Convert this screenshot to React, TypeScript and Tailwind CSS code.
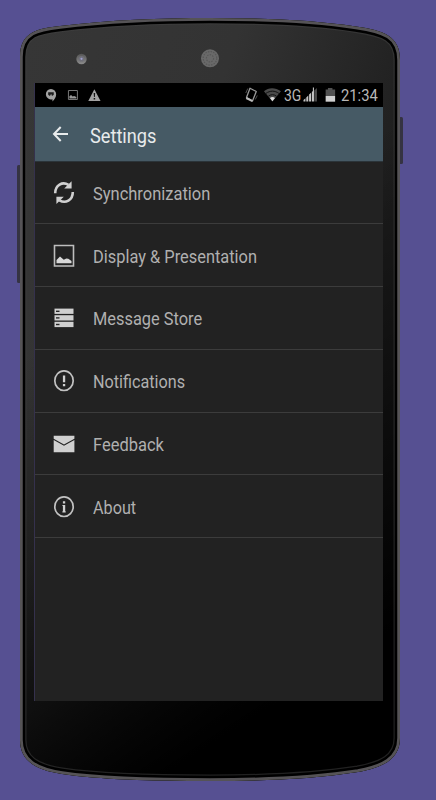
import type { ReactNode } from 'react'

interface SettingsItem {
  label: string
  icon: ReactNode
  labelClass: string
}

const BODY =
  'M20 57C20 31 39 28.5 60 26C110 20 160 18 210 18C262 18 313 20 356 26.5C384 30.5 400 36 400 60V738C400 760 382 767.5 358 772C310 779.5 260 781 210 781C150 781 100 779.5 62 774C36 770 20 761 20 740Z'

function PhoneBody() {
  return (
    <svg className="absolute inset-0" width="436" height="800" viewBox="0 0 436 800">
      <defs>
        <linearGradient id="shell" gradientUnits="userSpaceOnUse" x1="20" y1="60" x2="400" y2="180">
          <stop offset="0" stopColor="#363636" />
          <stop offset="0.5" stopColor="#333333" />
          <stop offset="1" stopColor="#1e1e1e" />
        </linearGradient>
        <linearGradient id="shade" gradientUnits="userSpaceOnUse" x1="20" y1="360" x2="250" y2="720">
          <stop offset="0" stopColor="#000" stopOpacity="0" />
          <stop offset="1" stopColor="#000" />
        </linearGradient>
        <linearGradient id="lens" x1="0" y1="0" x2="0" y2="1">
          <stop offset="0" stopColor="#555" />
          <stop offset="1" stopColor="#8c8c8c" />
        </linearGradient>
        <clipPath id="shell-clip">
          <path d={BODY} />
        </clipPath>
      </defs>
      <rect x="17" y="165" width="4" height="118" rx="1.5" fill="#353343" />
      <rect x="399" y="117" width="4" height="47" rx="1.5" fill="#353343" />
      <g clipPath="url(#shell-clip)">
        <path d={BODY} fill="url(#shell)" />
        <path d={BODY} fill="url(#shade)" />
        <path d={BODY} fill="none" stroke="#424242" strokeOpacity="0.5" strokeWidth="13" />
        <path d={BODY} fill="none" stroke="#000" strokeWidth="10.5" />
        <path d={BODY} fill="none" stroke="#555356" strokeWidth="5.5" />
      </g>
      <circle cx="81.5" cy="59" r="5.2" fill="url(#lens)" />
      <circle cx="81.5" cy="58.8" r="2.8" fill="#70707a" />
      <circle cx="81.5" cy="58.8" r="1.1" fill="#a0a0d0" />
      <circle cx="210" cy="58.3" r="9" fill="#696969" />
      <circle cx="210" cy="58.3" r="6.8" fill="none" stroke="#575757" strokeWidth="1.2" strokeDasharray="1.5 1.2" />
      <circle cx="210" cy="58.3" r="3.6" fill="none" stroke="#585858" strokeWidth="1.2" strokeDasharray="1.5 1.2" />
    </svg>
  )
}

function StatusBar() {
  return (
    <div className="flex h-6 shrink-0 items-center bg-black text-[#b8b8b8]">
      <svg width="68" height="24" viewBox="0 0 68 24" fill="#a2a2a2">
        <path d="M16 6a5.200 5.200 0 0 1 5.200 5.200c0 3-1.800 5.500-3.700 7.300v-2.300A5.200 5.200 0 1 1 16 6z" />
        <path d="M13.200 9.300h5.600v2.500l-1.300 1h-.8l.2-1.300h-1.300l-.4 1.300h-.8l-1.200-1z" fill="#1c1c1c" />
        <path d="M33.500 7.500h9v9h-9z" fill="none" stroke="#777" strokeWidth="1" />
        <path d="M34.500 15.500v-2.200l1.600-1.300 1.600 1.500 1.500-.6 2.200 1v1.600z" fill="#999" />
        <path d="M59.500 6.200 65.700 18H53.400z" />
        <path d="M58.800 10h1.500l-.3 4h-.9zM58.800 15h1.500v1.500h-1.500z" fill="#111" />
      </svg>
      <svg className="ml-[140px]" width="41" height="24" viewBox="0 0 41 24">
        <g fill="none" stroke="#999" strokeWidth="1.300">
          <path d="M7 5.200 13.300 8.500 9.500 18 3.500 14.500z" strokeLinejoin="round" />
          <path d="M3.300 15 9.500 18.200" strokeWidth="2" stroke="#bbb" />
          <path d="M2.800 10 4.800 5.500M14.300 12.500 12.300 16.500" strokeWidth=".8" stroke="#666" />
        </g>
        <path d="M21 8.200C25.500 4.300 32.500 4.300 38 8.200L29.500 18.500z" fill="#4a4a4a" />
        <path d="M23 10.400c4-3 9-3 13 0M25.400 13.200c2.700-2 5.500-2 8.200 0" fill="none" stroke="#111" strokeWidth="1" />
        <path d="M27 15c1.600-1.200 3.400-1.200 5 0l-2.500 3.300z" fill="#ddd" />
      </svg>
      <span className="w-[18px] whitespace-nowrap text-[17px] leading-6">
        <span className="inline-block origin-left scale-x-[0.82]">3G</span>
      </span>
      <svg width="39" height="24" viewBox="0 0 39 24">
        <path d="M12.300 7.500 15 5v13.500h-2.700z" fill="#4a4a4a" />
        <path d="M1.500 18.500v-1.500L3.500 15.200v3.300zM4.300 18.500v-4.100l2-1.900v6zM7.100 18.500v-6.900l2-1.900v8.800zM9.900 18.500V9l1-1V4.500h1.100v14z" fill="#c4c4c4" />
        <path d="M23.700 6.500H26V5h4.500v1.500H33.200V13h-9.500z" fill="#515151" />
        <path d="M23.700 13h9.500v5.700h-9.500z" fill="#d0d0d0" />
      </svg>
      <span className="whitespace-nowrap text-[17px] leading-6">
        <span className="inline-block origin-left scale-x-[0.87]">21:34</span>
      </span>
    </div>
  )
}

function SyncIcon() {
  return (
    <svg width="22" height="24" viewBox="0 0 22 24" fill="none" stroke="#d0d0d0" strokeWidth="2.600">
      <path d="M2.200 12.200C2.200 4 9.500 .2 15.500 3.900M19.800 11C19.800 19.200 12.500 23 6.500 19.300" />
      <path d="M18.600 .3v7.200h-7.400zM3.400 22.900v-7.200h7.400z" fill="#d0d0d0" stroke="none" />
    </svg>
  )
}

function PictureIcon() {
  return (
    <svg width="22" height="24" viewBox="0 0 22 24">
      <path d="M1.500 1.500h19v20.500h-19z" fill="none" stroke="#bdbdbd" strokeWidth="1.600" />
      <path d="M3.500 19.200v-3.200l3.500-3.600 3.800 3.300 2.500-1.300 2 .4 3.200 2.100v2.300z" fill="#d8d8d8" />
    </svg>
  )
}

function StoreIcon() {
  return (
    <svg width="22" height="24" viewBox="0 0 22 24">
      {[2.6, 9.2, 15.8].map((y) => (
        <g key={y}>
          <path d={`M1.500 ${y}h19v5.300h-19z`} fill="#d0d0d0" />
          <path d={`M3 ${y + 2}h3.500v1.400H3z`} fill="#252525" />
        </g>
      ))}
    </svg>
  )
}

function AlertIcon() {
  return (
    <svg width="22" height="24" viewBox="0 0 22 24">
      <ellipse cx="11" cy="11.700" rx="9.200" ry="9.800" fill="none" stroke="#c2c2c2" strokeWidth="1.700" />
      <path d="M9.900 6.500h2.300v6.800H9.900zM9.900 15h2.300v2.300H9.900z" fill="#d0d0d0" />
    </svg>
  )
}

function MailIcon() {
  return (
    <svg width="22" height="24" viewBox="0 0 22 24" fill="#d0d0d0">
      <path d="M.7 3.700h20.700v3L11 12.500.7 6.700z" />
      <path d="M.7 8 11 13.800 21.400 8v12.200H.7z" />
    </svg>
  )
}

function InfoIcon() {
  return (
    <svg width="22" height="24" viewBox="0 0 22 24">
      <ellipse cx="11" cy="11.700" rx="9.200" ry="9.800" fill="none" stroke="#c2c2c2" strokeWidth="1.700" />
      <path d="M9.900 6.200h2.300v2.200H9.900zM9.400 9.900h2.800v6.300h.5v1.200H9.400v-1.200h.5v-5.100h-.5z" fill="#d0d0d0" />
    </svg>
  )
}

const items: SettingsItem[] = [
  { label: 'Synchronization', icon: <SyncIcon />, labelClass: 'scale-x-[0.915]' },
  { label: 'Display & Presentation', icon: <PictureIcon />, labelClass: 'scale-x-[0.911]' },
  { label: 'Message Store', icon: <StoreIcon />, labelClass: 'scale-x-[0.91]' },
  { label: 'Notifications', icon: <AlertIcon />, labelClass: 'scale-x-[0.9]' },
  { label: 'Feedback', icon: <MailIcon />, labelClass: 'scale-x-[0.915]' },
  { label: 'About', icon: <InfoIcon />, labelClass: 'scale-x-[0.9]' },
]

export default function App() {
  return (
    <div className="relative h-[800px] w-[436px] overflow-hidden bg-[#565092] pt-[83px] pl-[34px] font-['Roboto',sans-serif]">
      <PhoneBody />
      <main className="relative flex h-[618px] w-[349px] flex-col border-l border-[#35314d] bg-[#222222]">
        <StatusBar />
        <header className="flex h-[54.5px] shrink-0 items-center border-b border-[#2b3439] bg-[#465a65] pt-px pl-[17px] text-[#e8ebec]">
          <svg width="17" height="18" viewBox="0 0 17 18" fill="none" stroke="currentColor" strokeWidth="2">
            <path d="M16 9H2.500M8.700 2 2 9l6.700 7" />
          </svg>
          <h1 className="ml-[20.5px] origin-left scale-x-[0.91] whitespace-nowrap pt-[3px] text-xl font-normal">
            Settings
          </h1>
        </header>
        <ul>
          {items.map((item) => (
            <li key={item.label} className="flex h-[62.8px] items-center border-b border-[#3c3c3c] pt-px pl-[18px]">
              {item.icon}
              <span
                className={`ml-[18px] origin-left whitespace-nowrap pt-[2px] text-lg text-[#b0b0b0] ${item.labelClass}`}
              >
                {item.label}
              </span>
            </li>
          ))}
        </ul>
      </main>
    </div>
  )
}
